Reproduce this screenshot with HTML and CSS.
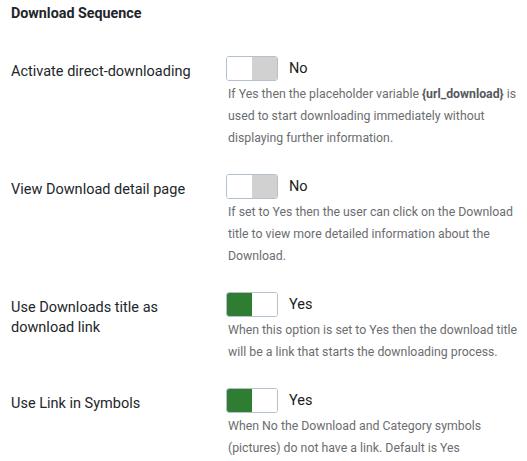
FILE: index.html
```html
<!DOCTYPE html>
<html>
<head>
    <meta charset="utf-8" />
    <title>Download Sequence</title>
    <link rel="stylesheet" href="styles.css">
</head>
<body>
    <div class="panel">
        <h3 class="legend">Download Sequence</h3>

        <div class="row">
            <div class="label">Activate direct-downloading</div>
            <div class="control">
                <div class="switchLine">
                    <span class="switcher"><span class="half off"></span><span class="half grey"></span></span>
                    <span class="state">No</span>
                </div>
                <div class="desc">If Yes then the placeholder variable <b>{url_download}</b> is used to start downloading immediately without displaying further information.</div>
            </div>
        </div>

        <div class="row">
            <div class="label">View Download detail page</div>
            <div class="control">
                <div class="switchLine">
                    <span class="switcher"><span class="half off"></span><span class="half grey"></span></span>
                    <span class="state">No</span>
                </div>
                <div class="desc">If set to Yes then the user can click on the Download title to view more detailed information about the Download.</div>
            </div>
        </div>

        <div class="row">
            <div class="label">Use Downloads title as download link</div>
            <div class="control">
                <div class="switchLine">
                    <span class="switcher"><span class="half green"></span><span class="half off"></span></span>
                    <span class="state">Yes</span>
                </div>
                <div class="desc">When this option is set to Yes then the download title will be a link that starts the downloading process.</div>
            </div>
        </div>

        <div class="row">
            <div class="label">Use Link in Symbols</div>
            <div class="control">
                <div class="switchLine">
                    <span class="switcher"><span class="half green"></span><span class="half off"></span></span>
                    <span class="state">Yes</span>
                </div>
                <div class="desc">When No the Download and Category symbols (pictures) do not have a link. Default is Yes</div>
            </div>
        </div>
    </div>
</body>
</html>
```

FILE: styles.css
```css
body {
    margin: 0;
    background: #fff;
    font-family: Roboto, "Liberation Sans", sans-serif;
    color: #22262a;
}

.panel {
    padding: 3px 5px 0 11px;
}

.legend {
    margin: 0;
    font-size: 14.3px;
    font-weight: bold;
    line-height: 20px;
    color: #22262a;
}

.row {
    display: grid;
    grid-template-columns: 215px 1fr;
    margin-top: 25px;
}

.row:first-of-type {
    margin-top: 33px;
}

.label {
    font-size: 14.5px;
    line-height: 20px;
    padding-top: 6px;
    padding-right: 10px;
}

.switchLine {
    display: flex;
    align-items: center;
    gap: 11px;
}

.switcher {
    display: flex;
    width: 50px;
    height: 23px;
    border: 1px solid #b3c1cf;
    border-radius: 3px;
    overflow: hidden;
}

.half {
    flex: 1;
}

.off {
    background: #fff;
}

.grey {
    background: #d1d1d1;
}

.green {
    background: #2e7d32;
}

.state {
    font-size: 14.5px;
    color: #1b1d20;
    padding-bottom: 1px;
}

.desc {
    margin-top: 2px;
    padding-left: 2px;
    font-size: 12.3px;
    line-height: 22px;
    color: #6b6d70;
}

.desc b {
    color: #55585c;
}
```
